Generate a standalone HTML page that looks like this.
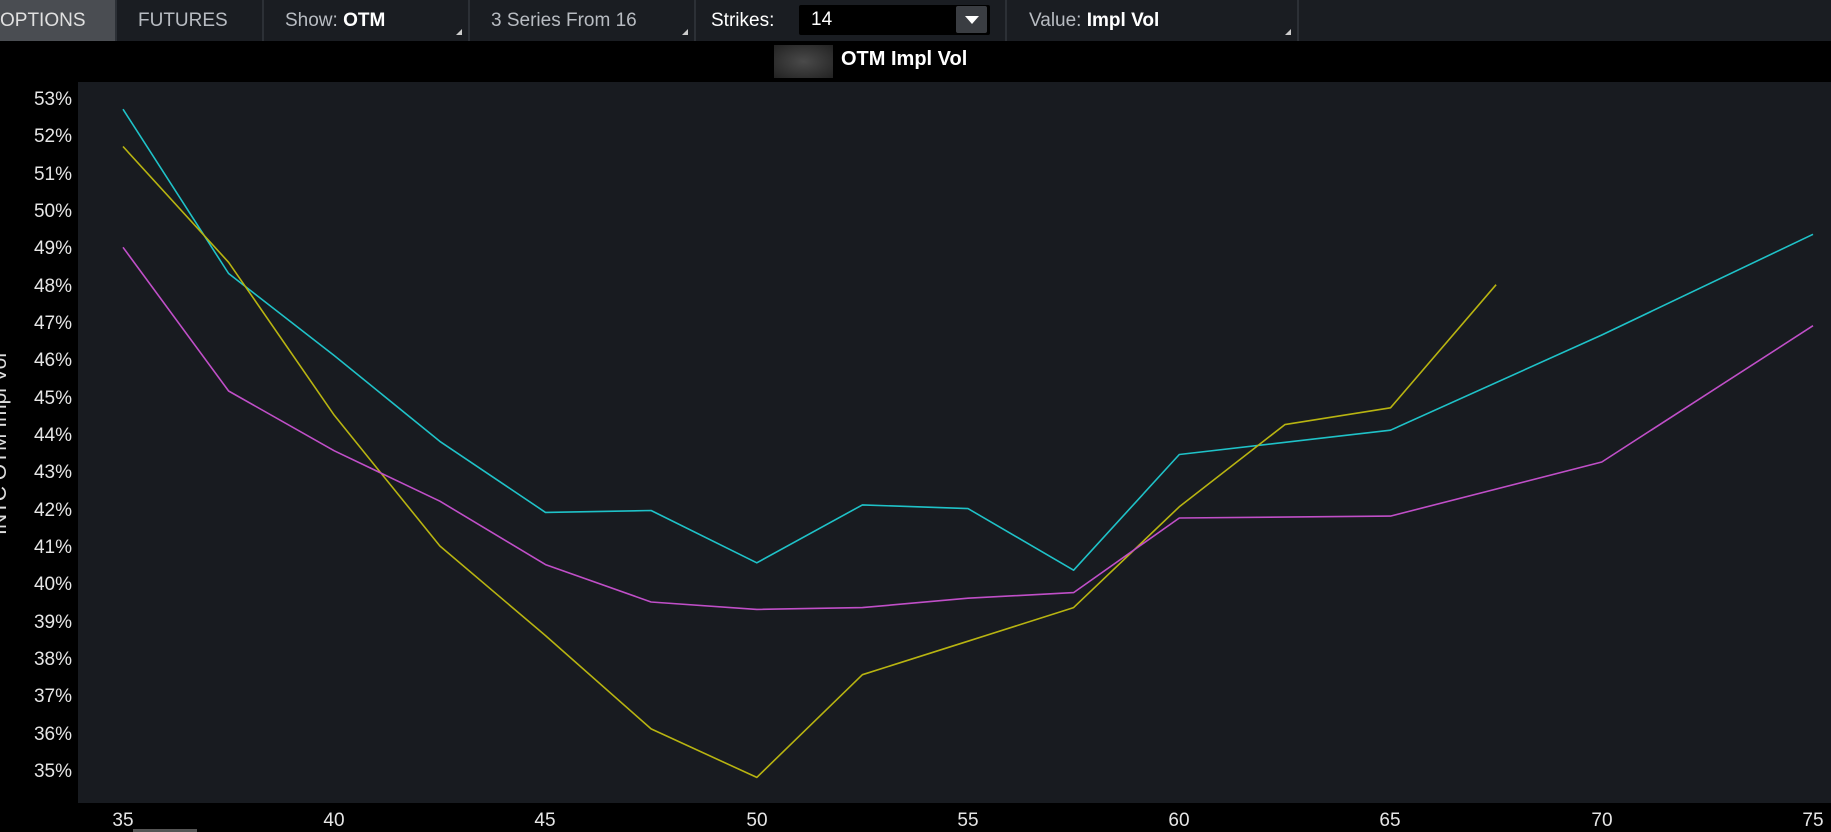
<!DOCTYPE html>
<html><head><meta charset="utf-8"><style>
html,body{margin:0;padding:0;background:#000;width:1831px;height:832px;overflow:hidden;font-family:"Liberation Sans",sans-serif}
.tb{position:absolute;left:0;top:0;width:1831px;height:41px;background:#1a1d22}
.seg{position:absolute;top:0;height:41px;line-height:41px;font-size:19px;color:#b8bcc2;border-right:2px solid #2c3036;box-sizing:border-box;padding-left:12px}
.seg b{color:#fff}
.tri{position:absolute;right:6px;bottom:6px;width:0;height:0;border-left:6px solid transparent;border-bottom:6px solid #ccc}
</style></head><body>
<div class="tb">
<div class="seg" style="left:0;width:117px;background:#4a4d52;color:#e0e0e0;padding-left:0">OPTIONS</div>
<div class="seg" style="left:117px;width:147px;padding-left:21px">FUTURES</div>
<div class="seg" style="left:264px;width:206px;padding-left:21px">Show: <b>OTM</b><span class="tri"></span></div>
<div class="seg" style="left:470px;width:226px;padding-left:21px">3 Series From 16<span class="tri"></span></div>
<div class="seg" style="left:696px;width:311px;padding-left:15px;color:#fff">Strikes:
<div style="position:absolute;left:103px;top:5px;width:191px;height:30px;background:#000;border-radius:2px;line-height:30px;color:#fff;padding-left:12px;box-sizing:border-box">14
<div style="position:absolute;right:3px;top:1px;width:31px;height:27px;background:#3a3d42;border-radius:2px"><div style="position:absolute;left:9px;top:10px;border-left:7px solid transparent;border-right:7px solid transparent;border-top:8px solid #fff"></div></div></div></div>
<div class="seg" style="left:1007px;width:292px;padding-left:22px">Value: <b>Impl Vol</b><span class="tri"></span></div>
</div>
<div style="position:absolute;left:774px;top:45px;width:59px;height:33px;background:radial-gradient(#4a4a4a,#222)"></div>
<div style="position:absolute;left:841px;top:48px;font-size:20px;font-weight:bold;color:#fff">OTM Impl Vol</div>
<div style="position:absolute;left:-110px;top:432px;width:220px;transform:rotate(-90deg);transform-origin:center;font-size:21px;color:#ddd;text-align:center;line-height:24px">INTC OTM Impl Vol</div>
<div style="position:absolute;left:133px;top:829px;width:64px;height:3px;background:#555"></div>
<svg width="1831" height="832" style="position:absolute;left:0;top:0" xmlns="http://www.w3.org/2000/svg">
<rect x="78" y="82" width="1753" height="721" fill="#181b20"/>
<g fill="#e6e6e6" font-size="19" font-family="Liberation Sans" text-anchor="end">
<text x="72" y="105">53%</text><text x="72" y="142">52%</text><text x="72" y="180">51%</text><text x="72" y="217">50%</text><text x="72" y="254">49%</text><text x="72" y="292">48%</text><text x="72" y="329">47%</text><text x="72" y="366">46%</text><text x="72" y="404">45%</text><text x="72" y="441">44%</text><text x="72" y="478">43%</text><text x="72" y="516">42%</text><text x="72" y="553">41%</text><text x="72" y="590">40%</text><text x="72" y="628">39%</text><text x="72" y="665">38%</text><text x="72" y="702">37%</text><text x="72" y="740">36%</text><text x="72" y="777">35%</text>
</g>
<g fill="#e6e6e6" font-size="19" font-family="Liberation Sans" text-anchor="middle">
<text x="123" y="826">35</text><text x="334" y="826">40</text><text x="545" y="826">45</text><text x="757" y="826">50</text><text x="968" y="826">55</text><text x="1179" y="826">60</text><text x="1390" y="826">65</text><text x="1602" y="826">70</text><text x="1813" y="826">75</text>
</g>
<g fill="none" stroke-width="1.6" stroke-linejoin="round">
<polyline stroke="#1fc2c8" points="123,109.2 228.6,273.5 334.3,355.6 439.9,441.4 545.5,512.4 651.1,510.5 756.8,562.8 862.4,504.9 968,508.6 1073.6,570.2 1179.3,454.5 1390.5,430.2 1601.8,335 1813,234.3"/>
<polyline stroke="#b8b411" points="123,146.5 228.6,262.3 334.3,415.3 439.9,546 545.5,635.6 651.1,728.9 756.8,777.4 862.4,674.7 968,641.2 1073.6,607.6 1179.3,506.8 1284.9,424.6 1390.5,407.8 1496.1,284.7"/>
<polyline stroke="#c04fc8" points="123,247.3 228.6,391 334.3,450.8 439.9,501.2 545.5,564.6 651.1,602 756.8,609.4 862.4,607.6 968,598.2 1073.6,592.6 1179.3,518 1390.5,516.1 1601.8,462 1813,325.7"/>
</g>
</svg>
</body></html>
